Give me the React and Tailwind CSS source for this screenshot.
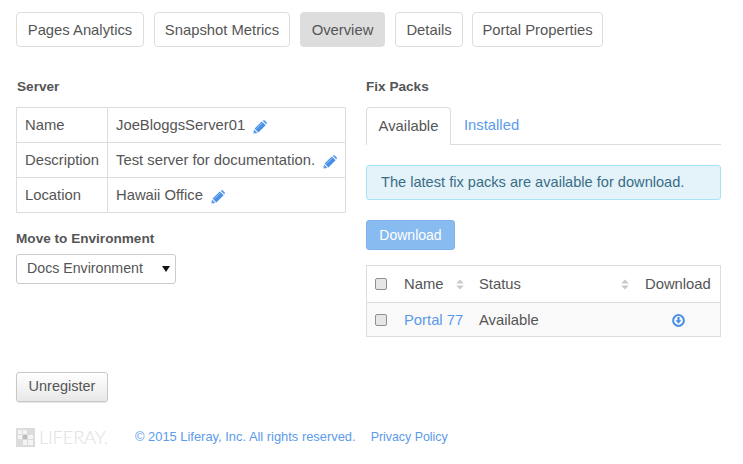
const Pencil = () => (
  <svg width="14" height="14" viewBox="0 0 14 14" className="block" aria-hidden="true">
    <path d="M0.4 13.6 L1 9.4 L4.6 13 Z" fill="#5b9bea" />
    <path d="M1.6 8.6 L8.8 1.4 L12.6 5.2 L5.4 12.4 Z" fill="#4a8fe6" />
    <path d="M9.6 0.8 L10.6 0.2 Q11.2 -0.1 11.8 0.4 L13.6 2.2 Q14.1 2.8 13.8 3.4 L13.2 4.4 Z" fill="#5b9bea" />
    <path d="M3.4 8.8 L9.4 2.8" stroke="#a9cdf5" strokeWidth="0.8" />
  </svg>
);

const Sort = () => (
  <svg width="8" height="11" viewBox="0 0 8 11" aria-hidden="true">
    <path d="M4 0.5 L7.8 4.6 L0.2 4.6 Z" fill="#c9c9c9" />
    <path d="M4 10.5 L7.8 6.4 L0.2 6.4 Z" fill="#c9c9c9" />
  </svg>
);

const Box = () => (
  <span className="block w-3 h-3 rounded-[2px] border border-[#8f8f8f] bg-[#e6e6e6]" />
);

const Pill = ({ children, active, w }) => (
  <a className={`h-[35px] flex items-center justify-center pt-px rounded border border-[#dddddd] ${w} ${active ? "bg-[#dddddd]" : "bg-white"}`}>
    {children}
  </a>
);

const rows = [
  ["Name", "JoeBloggsServer01", "h-[34px]"],
  ["Description", "Test server for documentation.", "h-[35px] border-t border-[#dddddd]"],
  ["Location", "Hawaii Office", "h-[35px] border-t border-[#dddddd]"],
];

export default function App() {
  return (
    <div className="w-[743px] h-[464px] bg-white overflow-hidden pl-4 pt-3 text-[#555555] text-[14.8px] font-['Liberation_Sans',Arial,sans-serif]">
      <nav className="flex gap-[10px]">
        <Pill w="w-[128px]">Pages Analytics</Pill>
        <Pill w="w-[136px]">Snapshot Metrics</Pill>
        <Pill w="w-[85px]" active>Overview</Pill>
        <Pill w="w-[68px]">Details</Pill>
        <Pill w="w-[131px] -ml-px">Portal Properties</Pill>
      </nav>

      <div className="flex gap-5 mt-[31px] h-[278px]">
        <section className="w-[330px]">
          <h2 className="text-[13.6px] font-bold leading-[18px] pl-px">Server</h2>
          <div className="mt-[11px] border border-[#dddddd]">
            {rows.map(([k, v, h]) => (
              <div key={k} className={`flex items-center ${h}`}>
                <div className="w-[91px] h-full flex items-center pl-2 border-r border-[#dddddd]">{k}</div>
                <div className="pl-2 flex items-center">
                  <span>{v}</span>
                  <span className="ml-[8px] flex mt-[3px]"><Pencil /></span>
                </div>
              </div>
            ))}
          </div>
          <h2 className="text-[13.6px] font-bold leading-[18px] mt-[17px]">Move to Environment</h2>
          <div className="mt-[6px] w-[160px] h-[30px] border border-[#cccccc] rounded-[3px] flex items-center justify-between pl-[10px] pr-[5px] bg-white text-[14.2px]">
            <span>Docs Environment</span>
            <svg width="8" height="6" viewBox="0 0 8 6" aria-hidden="true"><path d="M0 0 H8 L4 6 Z" fill="#111111" /></svg>
          </div>
        </section>

        <section className="w-[355px]">
          <h2 className="text-[13.6px] font-bold leading-[18px]">Fix Packs</h2>
          <div className="mt-[11px] flex border-b border-[#dddddd] h-[38px]">
            <div className="h-[38px] w-[85px] flex items-center justify-center bg-white border border-b-0 border-[#dddddd] rounded-t">Available</div>
            <div className="h-[37px] flex items-center pl-[13px] text-[#5b9bea]">Installed</div>
          </div>
          <div className="mt-[20px] h-[35px] flex items-center pl-[14px] pt-px bg-[#e4f3fa] border border-[#a5e3f7] rounded-[3px] text-[#3a6d85] text-[14.6px]">
            The latest fix packs are available for download.
          </div>
          <div className="mt-[20px] w-[89px] h-[30px] flex items-center justify-center rounded-[3px] bg-[#88bbf0] border border-[#7eb2e8] text-white text-[14px]">
            Download
          </div>
          <div className="mt-[15px] border border-[#dddddd]">
            <div className="flex h-[37px] items-center border-b border-[#dddddd]">
              <div className="w-[37px] pl-2 flex"><Box /></div>
              <div className="w-[75px] flex items-center justify-between pr-[15px]"><span className="pt-px">Name</span><Sort /></div>
              <div className="w-[165px] flex items-center justify-between pr-[15px]"><span className="pt-px">Status</span><Sort /></div>
              <div className="ml-[1px] pt-px">Download</div>
            </div>
            <div className="flex h-[33px] items-center bg-[#f9f9f9]">
              <div className="w-[37px] pl-2 flex"><Box /></div>
              <div className="w-[75px] text-[#5b9bea] pt-px">Portal 77</div>
              <div className="w-[165px] pt-px">Available</div>
              <div className="flex-1 flex justify-center pr-[7px] pt-px">
                <svg width="13" height="13" viewBox="0 0 13 13" aria-hidden="true">
                  <circle cx="6.5" cy="6.5" r="5.4" fill="none" stroke="#4a8fe6" strokeWidth="2" />
                  <path d="M5.4 3 H7.6 V6.2 H9.4 L6.5 9.8 L3.6 6.2 H5.4 Z" fill="#4a8fe6" />
                </svg>
              </div>
            </div>
          </div>
        </section>
      </div>

      <div className="mt-[16px] w-[92px] h-[30px] flex items-center justify-center rounded-[3px] border border-[#c8c8c8] bg-gradient-to-b from-[#ffffff] to-[#e8e8e8] shadow-[0_1px_1px_rgba(0,0,0,0.1)] text-[14.5px]">
        Unregister
      </div>

      <footer className="mt-[25px] flex items-center h-[20px] text-[12.9px]">
        <div className="flex items-center w-[119px]">
          <svg width="19" height="19" viewBox="0 0 19 19" className="shrink-0" aria-hidden="true">
            <rect width="19" height="19" fill="#dcdcdc" />
            <rect x="2" y="2" width="4" height="4" fill="#f4f4f4" />
            <rect x="7" y="2" width="4" height="4" fill="#f4f4f4" />
            <rect x="2" y="7" width="4" height="4" fill="#f4f4f4" />
            <rect x="7" y="7" width="4" height="4" fill="#bdbdbd" />
            <rect x="12" y="7" width="5" height="4" fill="#f4f4f4" />
            <rect x="7" y="12" width="4" height="5" fill="#f4f4f4" />
            <rect x="12" y="12" width="5" height="5" fill="#f4f4f4" />
          </svg>
          <span className="ml-[4px] font-['Lato',sans-serif] font-light text-[18.5px] leading-none tracking-[-0.3px] text-[#e0e0e0]">LIFERAY.</span>
        </div>
        <span className="text-[#5b9bea]">© 2015 Liferay, Inc. All rights reserved.</span>
        <span className="ml-[15px] text-[#5b9bea] text-[12.4px]">Privacy Policy</span>
      </footer>
    </div>
  );
}
